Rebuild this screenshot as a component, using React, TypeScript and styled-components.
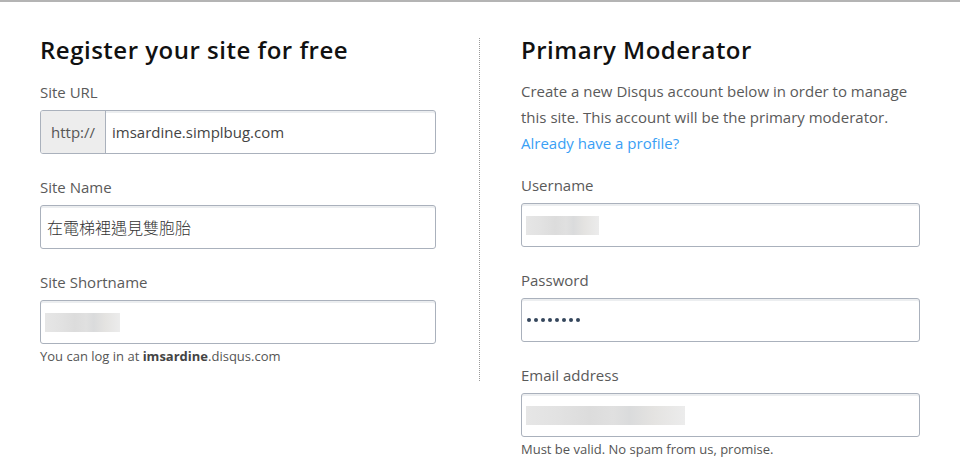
import React from "react";
import styled, { createGlobalStyle } from "styled-components";

const Global = createGlobalStyle`
  html, body { margin: 0; padding: 0; background: #fff; }
  body { font-family: "Open Sans", Lato, "Noto Sans CJK TC", sans-serif; color: #555; }
  * { box-sizing: border-box; }
`;

const Page = styled.div`
  width: 960px;
  height: 463px;
  border-top: 2px solid #b4b4b4;
  display: flex;
  align-items: flex-start;
  padding: 0 40px;
  overflow: hidden;
`;

const Column = styled.div<{ $w: number }>`
  width: ${(p) => p.$w}px;
  flex: none;
  display: flex;
  flex-direction: column;
`;

const Divider = styled.div`
  width: 0;
  height: 343px;
  margin: 36px 41px 0 43px;
  border-left: 1px dotted #9a9a9a;
  flex: none;
`;

const Heading = styled.h2`
  margin: 33px 0 0;
  font-size: 24px;
  line-height: 30px;
  font-weight: 600;
  color: #111;
  letter-spacing: 0.5px;
`;

const Label = styled.label<{ $mt: number }>`
  display: block;
  margin-top: ${(p) => p.$mt}px;
  font-size: 15px;
  line-height: 20px;
  color: #5a5a5a;
`;

const Para = styled.p`
  margin: 13px 0 0;
  font-size: 15px;
  line-height: 26px;
  color: #5a5a5a;
`;

const Link = styled.a`
  color: #3aa0f5;
  text-decoration: none;
`;

const InputBox = styled.div`
  margin-top: 8px;
  height: 44px;
  display: flex;
  align-items: stretch;
  border: 1px solid #aab1bc;
  border-radius: 3px;
  box-shadow: inset 0 2px 0 #eceef0;
  background: #fff;
  overflow: hidden;
`;

const Addon = styled.div`
  width: 65px;
  flex: none;
  display: flex;
  align-items: center;
  justify-content: center;
  background: #ededed;
  border-right: 1px solid #aab1bc;
  font-size: 15px;
  color: #555;
`;

const Value = styled.div`
  flex: 1;
  display: flex;
  align-items: center;
  padding: 0 6px;
  font-size: 15px;
  color: #444;
`;

const CjkValue = styled(Value)`
  font-family: "Noto Sans CJK TC", sans-serif;
  font-size: 16px;
  font-weight: 300;
  color: #333;
`;

const Blur = styled.div<{ $w: number }>`
  width: ${(p) => p.$w}px;
  height: 19px;
  margin-left: -2px;
  background: linear-gradient(
    90deg,
    #e6e6e6 0%,
    #e2e2e2 20%,
    #dcdcdc 40%,
    #e0e0e0 55%,
    #dadbdc 65%,
    #e4e3e1 80%,
    #ececec 100%
  );
`;

const Dots = styled.div`
  display: flex;
  gap: 3px;
  margin-left: -1px;
`;

const Dot = styled.span`
  width: 4px;
  height: 4px;
  border-radius: 50%;
  background: #34465c;
`;

const Help = styled.div`
  margin-top: 3px;
  font-size: 13px;
  line-height: 18px;
  color: #555;
  b { color: #444; font-weight: 700; }
`;

export default function App() {
  return (
    <>
      <Global />
      <Page>
        <Column $w={396}>
          <Heading>Register your site for free</Heading>
          <Label $mt={17}>Site URL</Label>
          <InputBox>
            <Addon>http://</Addon>
            <Value>imsardine.simplbug.com</Value>
          </InputBox>
          <Label $mt={23}>Site Name</Label>
          <InputBox>
            <CjkValue>在電梯裡遇見雙胞胎</CjkValue>
          </InputBox>
          <Label $mt={23}>Site Shortname</Label>
          <InputBox>
            <Value>
              <Blur $w={75} />
            </Value>
          </InputBox>
          <Help>
            You can log in at <b>imsardine</b>.disqus.com
          </Help>
        </Column>
        <Divider />
        <Column $w={399}>
          <Heading>Primary Moderator</Heading>
          <Para>
            Create a new Disqus account below in order to manage this site. This account will be the primary moderator.
            <br />
            <Link href="#">Already have a profile?</Link>
          </Para>
          <Label $mt={19}>Username</Label>
          <InputBox>
            <Value>
              <Blur $w={73} />
            </Value>
          </InputBox>
          <Label $mt={23}>Password</Label>
          <InputBox>
            <Value>
              <Dots>
                {Array.from({ length: 8 }).map((_, i) => (
                  <Dot key={i} />
                ))}
              </Dots>
            </Value>
          </InputBox>
          <Label $mt={23}>Email address</Label>
          <InputBox>
            <Value>
              <Blur $w={159} />
            </Value>
          </InputBox>
          <Help>Must be valid. No spam from us, promise.</Help>
        </Column>
      </Page>
    </>
  );
}
